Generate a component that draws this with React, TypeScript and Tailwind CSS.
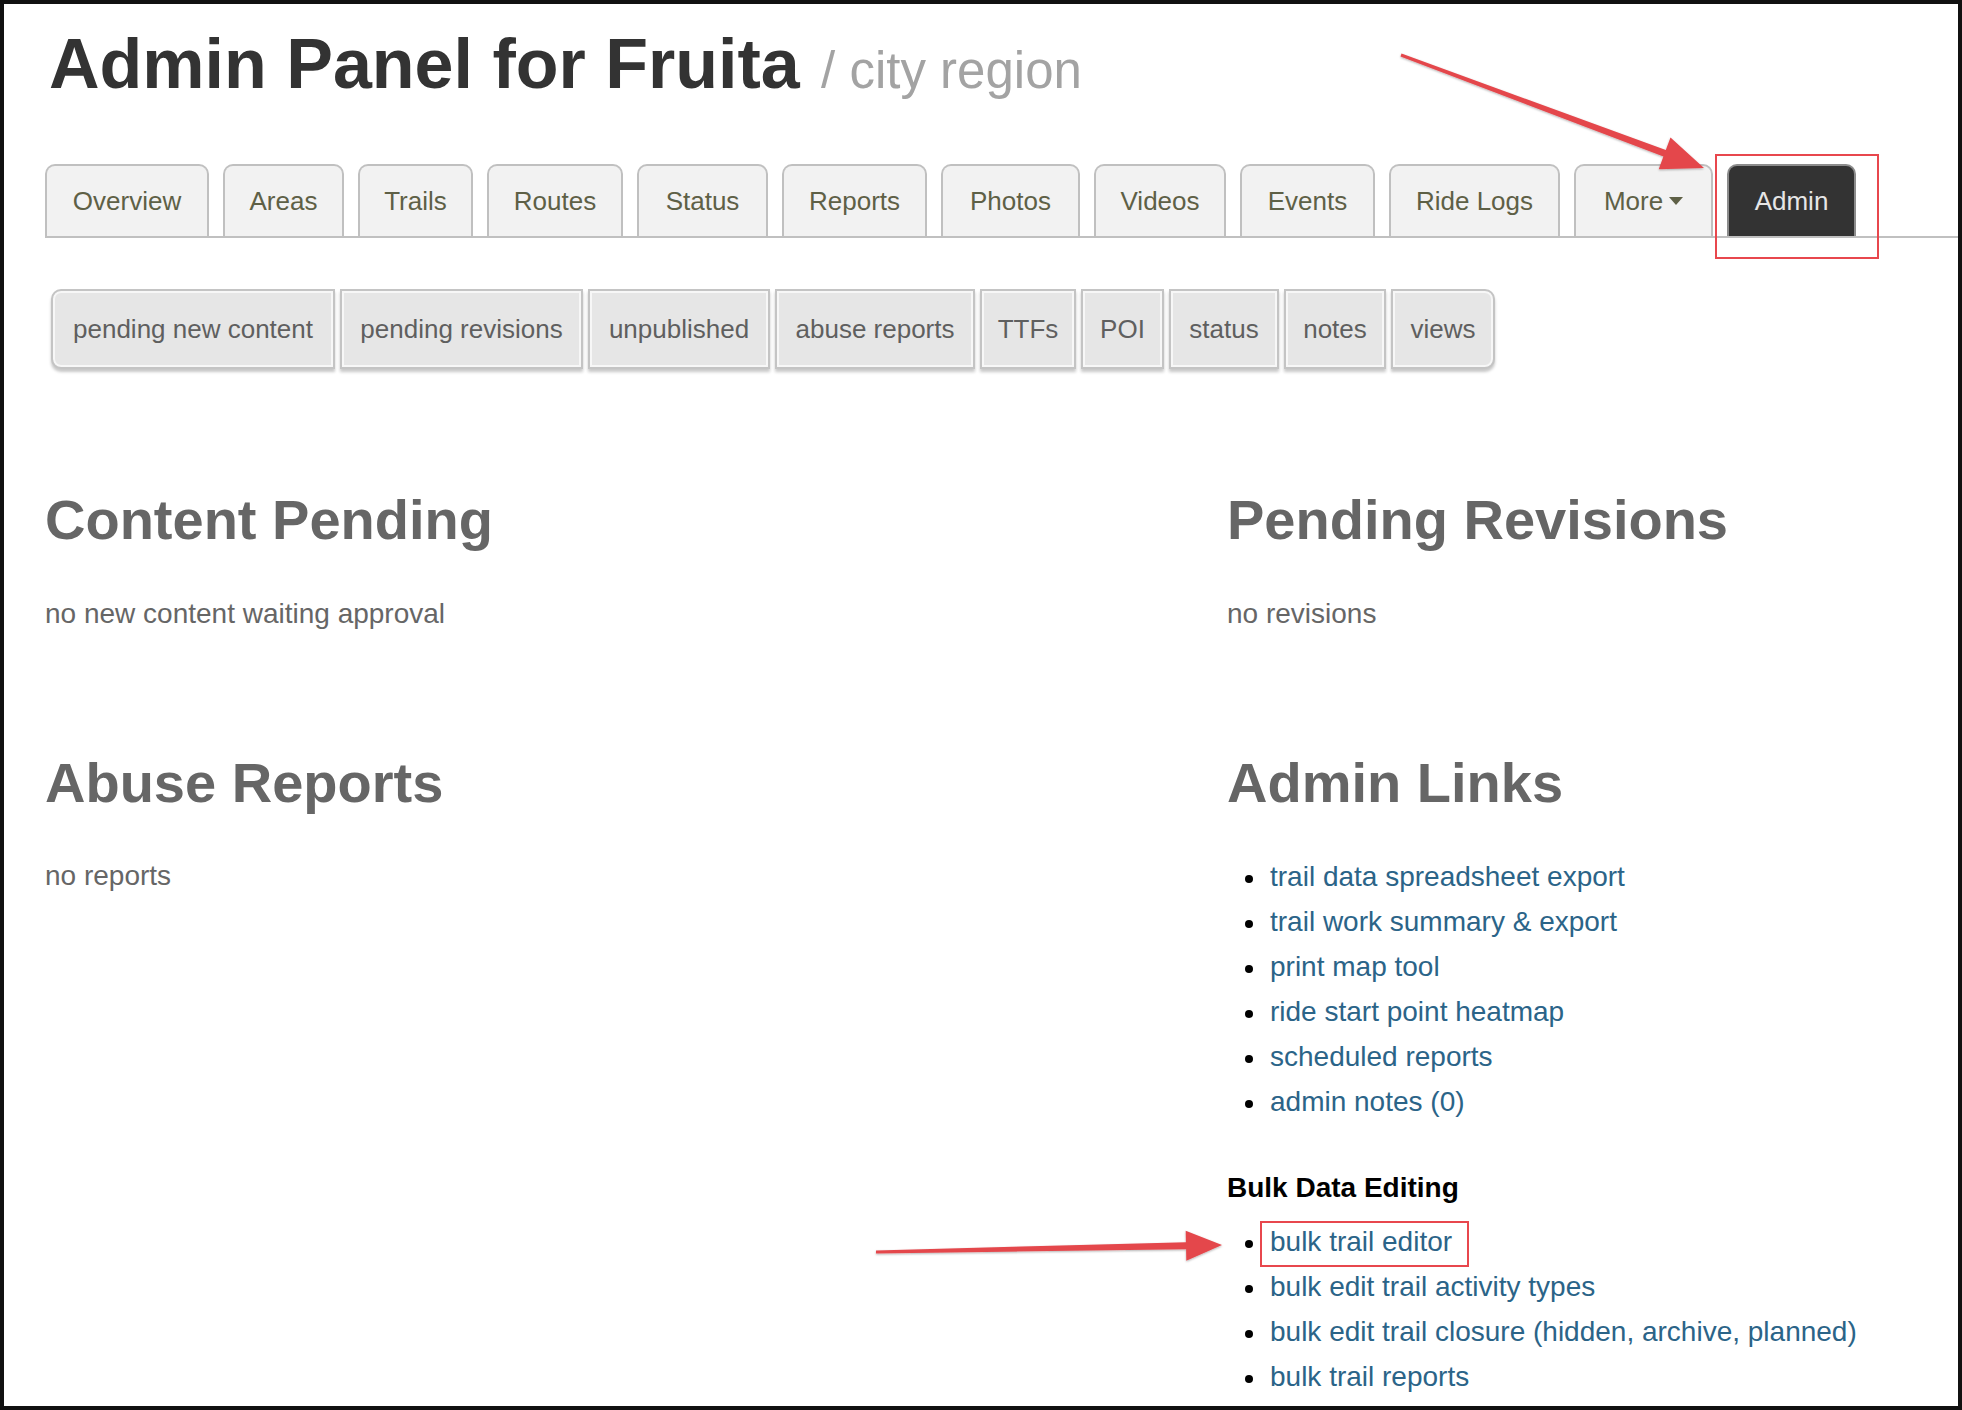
import React from "react";

const mainTabs: [string, string][] = [
  ["Overview", "w-[164px]"],
  ["Areas", "w-[121px]"],
  ["Trails", "w-[115px]"],
  ["Routes", "w-[136px]"],
  ["Status", "w-[131px]"],
  ["Reports", "w-[145px]"],
  ["Photos", "w-[139px]"],
  ["Videos", "w-[132px]"],
  ["Events", "w-[135px]"],
  ["Ride Logs", "w-[171px]"],
];
const subTabs: [string, string][] = [
  ["pending new content", "w-[284px]"],
  ["pending revisions", "w-[243px]"],
  ["unpublished", "w-[182px]"],
  ["abuse reports", "w-[200px]"],
  ["TTFs", "w-[96px]"],
  ["POI", "w-[83px]"],
  ["status", "w-[110px]"],
  ["notes", "w-[102px]"],
  ["views", "w-[104px]"],
];
const adminLinks = [
  "trail data spreadsheet export",
  "trail work summary & export",
  "print map tool",
  "ride start point heatmap",
  "scheduled reports",
  "admin notes (0)",
];
const bulkLinks = [
  "bulk trail editor",
  "bulk edit trail activity types",
  "bulk edit trail closure (hidden, archive, planned)",
  "bulk trail reports",
];

function LinkItem({ text }: { text: string }) {
  return (
    <li className="flex items-start">
      <span className="ml-[18px] mt-[21px] h-[8px] w-[8px] shrink-0 rounded-full bg-black" />
      <a className="ml-[17px] text-[28px] leading-[45px] text-[#2b6488] whitespace-nowrap">{text}</a>
    </li>
  );
}

export default function App() {
  return (
    <div className="relative h-[1410px] w-[1962px] overflow-hidden bg-[#111] p-[4px] font-['Liberation_Sans',Arial,sans-serif]">
      <div className="h-full w-full bg-white pl-[41px] pt-[20px]">
        <h1 className="ml-[4px] whitespace-nowrap text-[70px] font-bold leading-[80px] text-[#333]">
          Admin Panel for Fruita{" "}
          <span className="ml-[2px] text-[51px] font-normal leading-none text-[#a3a3a3]">/ city region</span>
        </h1>

        <div className="mt-[60px] flex items-end gap-[14px] border-b-2 border-[#c0c0c0]">
          {mainTabs.map(([t, w]) => (
            <div
              key={t}
              className={
                "flex h-[72px] items-center justify-center whitespace-nowrap rounded-t-[10px] border-2 border-b-0 border-[#c0c0c0] bg-[#f2f2f2] text-[26px] leading-none text-[#5e6046] " +
                w
              }
            >
              {t}
            </div>
          ))}
          <div className="flex h-[72px] w-[139px] items-center justify-center rounded-t-[10px] border-2 border-b-0 border-[#c0c0c0] bg-[#f2f2f2] text-[26px] leading-none text-[#5e6046]">
            More
            <svg className="ml-[6px]" width="14" height="8" viewBox="0 0 14 8">
              <polygon points="0,0 14,0 7,8" fill="#5e6046" />
            </svg>
          </div>
          <div className="flex h-[72px] w-[129px] items-center justify-center rounded-t-[10px] border-2 border-b-0 border-[#8c8c8c] bg-[#333] text-[26px] leading-none text-[#e6e6e6]">
            Admin
          </div>
        </div>

        <div className="ml-[6px] mt-[51px] flex gap-[5px]">
          {subTabs.map(([t, w], i) => (
            <div
              key={t}
              className={
                "flex h-[80px] items-center justify-center whitespace-nowrap border-2 border-[#c4c4c4] bg-[#e6e6e6] text-[26px] leading-none text-[#5f5f5f] shadow-[inset_0_0_0_2px_#f7f7f7,0_3px_3px_rgba(0,0,0,0.22)] " +
                w +
                " " +
                (i === 0 ? "rounded-l-[10px] " : "") +
                (i === subTabs.length - 1 ? "rounded-r-[10px]" : "")
              }
            >
              {t}
            </div>
          ))}
        </div>

        <div className="mt-[120px] grid grid-cols-[1182px_1fr]">
          <div>
            <h2 className="text-[56px] font-bold leading-[62px] text-[#666]">Content Pending</h2>
            <p className="mt-[40px] text-[28px] leading-[45px] text-[#666]">no new content waiting approval</p>
            <h2 className="mt-[116px] text-[56px] font-bold leading-[62px] text-[#666]">Abuse Reports</h2>
            <p className="mt-[39px] text-[28px] leading-[45px] text-[#666]">no reports</p>
          </div>
          <div>
            <h2 className="text-[56px] font-bold leading-[62px] text-[#666]">Pending Revisions</h2>
            <p className="mt-[40px] text-[28px] leading-[45px] text-[#666]">no revisions</p>
            <h2 className="mt-[116px] text-[56px] font-bold leading-[62px] text-[#666]">Admin Links</h2>
            <ul className="mt-[40px]">
              {adminLinks.map((l) => (
                <LinkItem key={l} text={l} />
              ))}
            </ul>
            <h4 className="mt-[41px] text-[28px] font-bold leading-[45px] text-black">Bulk Data Editing</h4>
            <ul className="mt-[9px]">
              {bulkLinks.map((l) => (
                <LinkItem key={l} text={l} />
              ))}
            </ul>
          </div>
        </div>
      </div>

      <svg
        className="pointer-events-none absolute left-0 top-0"
        width="1962"
        height="1410"
        viewBox="0 0 1962 1410"
      >
        <defs>
          <filter id="sh" x="-10%" y="-10%" width="120%" height="120%">
            <feDropShadow dx="0" dy="1" stdDeviation="1" floodColor="#000" floodOpacity="0.3" />
          </filter>
        </defs>
        <g fill="#e4474c" filter="url(#sh)">
          <polygon points="1401.5,53.6 1665.8,150.0 1670.5,137.4 1704,168 1658.7,169.2 1663.4,156.6 1400.5,56.4" />
          <polygon points="876,1250.5 1185.9,1242.2 1185.7,1230.7 1222,1245 1186.3,1260.7 1186.1,1249.2 876,1253.5" />
        </g>
        <rect x="1716" y="155" width="162" height="103" fill="none" stroke="#e8474d" strokeWidth="2" />
        <rect x="1261" y="1222" width="207" height="44" fill="none" stroke="#e8474d" strokeWidth="2" />
      </svg>
    </div>
  );
}
